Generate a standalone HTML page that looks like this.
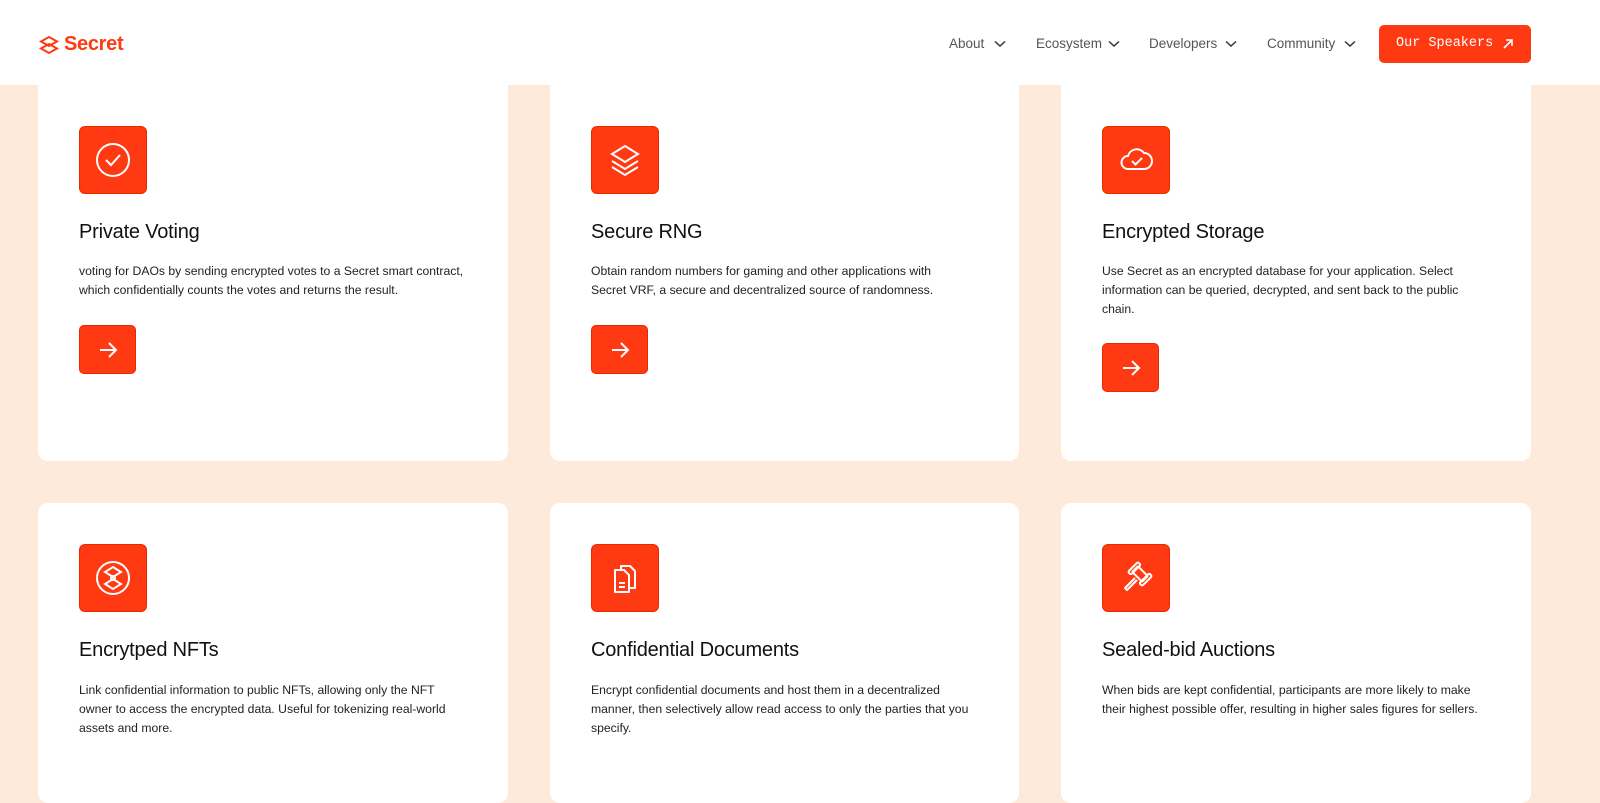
<!DOCTYPE html>
<html><head><meta charset="utf-8"><style>
*{margin:0;padding:0;box-sizing:border-box}
body{width:1600px;height:753px;overflow:hidden;background:#fdeadb;font-family:"Liberation Sans",sans-serif;position:relative}
.hdr{position:absolute;left:0;top:0;width:1600px;height:85px;background:#fff}
.logo{position:absolute;left:38px;top:33px;display:flex;align-items:center;color:#ff3912;font-size:20px;font-weight:bold;letter-spacing:-0.3px}
.logo svg{margin-right:4px}
.nav{position:absolute;top:36px;font-size:13.5px;color:#555}
.nav svg{position:absolute;top:4px}
.btn{position:absolute;left:1379px;top:25px;width:152px;height:38px;background:#ff3912;border-radius:5px;color:#fff;font-family:"Liberation Mono",monospace;font-size:13.5px;line-height:38px;padding-left:17px}
.card{position:absolute;background:#fff;border-radius:10px;width:470px}
.ico{position:absolute;left:41px;top:41px;width:68px;height:68px;background:#ff3912;border-radius:6px;border:1px solid #e52a00}
.ico svg{position:absolute;left:13px;top:13px}
.t{position:absolute;left:41px;top:136px;font-size:20px;color:#111;letter-spacing:-0.2px}
.d{position:absolute;left:41px;top:178px;font-size:12.2px;line-height:19px;color:#222;white-space:nowrap}
.ar{position:absolute;left:41px;width:57px;height:49px;background:#ff3912;border-radius:5px;border:1px solid #e52a00}
.ar svg{position:absolute;left:18px;top:14px}
</style></head><body>
<div class="hdr">
<div class="logo"><svg width="22" height="20" viewBox="0 0 22 20" fill="none" stroke="#ff3912" stroke-width="2"><path d="M11 2 L19 6.5 L11 11 L3 6.5 Z"/><path d="M11 9 L19 13.5 L11 18 L3 13.5 Z"/></svg>Secret</div>
<div class="nav" style="left:949px">About<svg style="left:45px" width="12" height="8" viewBox="0 0 12 8" fill="none" stroke="#333" stroke-width="1.5"><path d="M1 1.5 L6 6 L11 1.5"/></svg></div>
<div class="nav" style="left:1036px">Ecosystem<svg style="left:72px" width="12" height="8" viewBox="0 0 12 8" fill="none" stroke="#333" stroke-width="1.5"><path d="M1 1.5 L6 6 L11 1.5"/></svg></div>
<div class="nav" style="left:1149px">Developers<svg style="left:76px" width="12" height="8" viewBox="0 0 12 8" fill="none" stroke="#333" stroke-width="1.5"><path d="M1 1.5 L6 6 L11 1.5"/></svg></div>
<div class="nav" style="left:1267px">Community<svg style="left:77px" width="12" height="8" viewBox="0 0 12 8" fill="none" stroke="#333" stroke-width="1.5"><path d="M1 1.5 L6 6 L11 1.5"/></svg></div>
<div class="btn">Our Speakers <svg style="position:absolute;left:123px;top:13px" width="12" height="12" viewBox="0 0 12 12" fill="none" stroke="#fff" stroke-width="1.6"><path d="M2 10 L10 2 M4 2 H10 V8"/></svg></div>
</div>

<div class="card" style="left:38px;top:75px;height:386px">
<div class="ico" style="top:51px"><svg width="40" height="40" viewBox="0 0 40 40" fill="none" stroke="#fff" stroke-width="2"><circle cx="20" cy="20" r="16"/><path d="M13 20 L18 25 L27 15"/></svg></div>
<div class="t" style="top:146px">Private Voting</div>
<div class="d" style="top:187px">voting for DAOs by sending encrypted votes to a Secret smart contract,<br>which confidentially counts the votes and returns the result.</div>
<div class="ar" style="top:250px"><svg width="20" height="20" viewBox="0 0 20 20" fill="none" stroke="#fff" stroke-width="2"><path d="M2 10 H18 M11 3 L18 10 L11 17"/></svg></div>
</div>

<div class="card" style="left:550px;top:75px;height:386px;width:469px">
<div class="ico" style="top:51px"><svg width="40" height="40" viewBox="0 0 40 40" fill="none" stroke="#fff" stroke-width="2"><path d="M20 6 L33 14 L20 22 L7 14 Z"/><path d="M7 21 L20 29 L33 21"/><path d="M7 27 L20 35 L33 27"/></svg></div>
<div class="t" style="top:146px">Secure RNG</div>
<div class="d" style="top:187px">Obtain random numbers for gaming and other applications with<br>Secret VRF, a secure and decentralized source of randomness.</div>
<div class="ar" style="top:250px"><svg width="20" height="20" viewBox="0 0 20 20" fill="none" stroke="#fff" stroke-width="2"><path d="M2 10 H18 M11 3 L18 10 L11 17"/></svg></div>
</div>

<div class="card" style="left:1061px;top:75px;height:386px">
<div class="ico" style="top:51px"><svg width="40" height="40" viewBox="0 0 40 40" fill="none" stroke="#fff" stroke-width="2"><path d="M12 29 H28 A8 8 0 0 0 28 13 A9 9 0 0 0 12 16 A6.5 6.5 0 0 0 12 29 Z"/><path d="M16 21 L19.5 24.5 L26 18"/></svg></div>
<div class="t" style="top:146px">Encrypted Storage</div>
<div class="d" style="top:187px">Use Secret as an encrypted database for your application. Select<br>information can be queried, decrypted, and sent back to the public<br>chain.</div>
<div class="ar" style="top:268px"><svg width="20" height="20" viewBox="0 0 20 20" fill="none" stroke="#fff" stroke-width="2"><path d="M2 10 H18 M11 3 L18 10 L11 17"/></svg></div>
</div>

<div class="card" style="left:38px;top:503px;height:300px">
<div class="ico"><svg width="40" height="40" viewBox="0 0 40 40" fill="none" stroke="#fff" stroke-width="2"><circle cx="20" cy="20" r="16"/><path d="M20 9 L28 14 L20 19 L12 14 Z"/><path d="M20 21 L28 26 L20 31 L12 26 Z"/><circle cx="20" cy="20" r="2"/></svg></div>
<div class="t">Encrytped NFTs</div>
<div class="d">Link confidential information to public NFTs, allowing only the NFT<br>owner to access the encrypted data. Useful for tokenizing real-world<br>assets and more.</div>
</div>

<div class="card" style="left:550px;top:503px;height:300px;width:469px">
<div class="ico"><svg width="40" height="40" viewBox="0 0 40 40" fill="none" stroke="#fff" stroke-width="2" stroke-linejoin="round"><path d="M16 11 V8 H25 L30 13 V30 H25"/><path d="M10 12 H19 L24 17 V34 H10 Z"/><path d="M14 25 H20 M14 29 H20"/></svg></div>
<div class="t">Confidential Documents</div>
<div class="d">Encrypt confidential documents and host them in a decentralized<br>manner, then selectively allow read access to only the parties that you<br>specify.</div>
</div>

<div class="card" style="left:1061px;top:503px;height:300px">
<div class="ico"><svg width="40" height="40" viewBox="0 0 40 40" fill="none" stroke="#fff" stroke-width="2" stroke-linejoin="round"><g transform="rotate(45 24 16)"><rect x="17" y="12" width="14" height="8" rx="1"/><rect x="14" y="9" width="4" height="14" rx="1.5"/><rect x="30" y="9" width="4" height="14" rx="1.5"/></g><path d="M19 20 L9 30 L11 32 L21 22"/></svg></div>
<div class="t">Sealed-bid Auctions</div>
<div class="d">When bids are kept confidential, participants are more likely to make<br>their highest possible offer, resulting in higher sales figures for sellers.</div>
</div>
</body></html>
